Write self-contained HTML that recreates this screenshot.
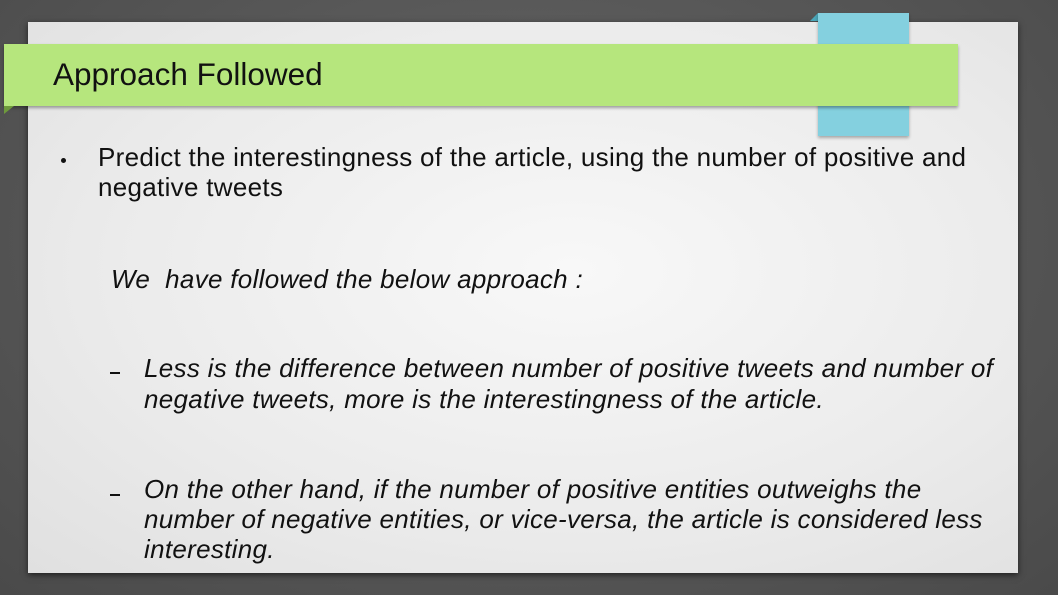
<!DOCTYPE html>
<html><head><style>
body{margin:0;width:1058px;height:595px;background:radial-gradient(ellipse at 50% 40%,#666 0%,#4a4a4a 100%);position:relative;overflow:hidden;font-family:"Liberation Sans",Arial,sans-serif;}
.paper{position:absolute;left:28px;top:22px;width:990px;height:551px;background:radial-gradient(ellipse at 55% 45%,#f8f8f8 0%,#ebebeb 60%,#e0e0e0 100%);box-shadow:0 2px 6px rgba(0,0,0,.6);}
.blue{position:absolute;left:818px;top:13px;width:91px;height:123px;background:#84d0df;box-shadow:0 2px 3px rgba(0,0,0,.3);}
.bluefold{position:absolute;left:810px;top:13px;width:0;height:0;border-right:8px solid #4aa6b8;border-top:8px solid transparent;}
.green{position:absolute;left:4px;top:44px;width:954px;height:62px;background:#b6e67d;box-shadow:0 2px 3px rgba(0,0,0,.35);}
.greenfold{position:absolute;left:4px;top:106px;width:0;height:0;border-top:8px solid #6e9a3c;border-left:10px solid transparent;transform:scaleX(-1);}
.t{position:absolute;white-space:nowrap;color:#111;font-size:26px;letter-spacing:0.3px;}
.title{left:53px;top:56px;font-size:31.5px;letter-spacing:0;}
i{font-style:italic}
.dash{position:absolute;width:10px;height:2px;background:#111;}
</style></head><body>
<div class="paper"></div>
<div class="bluefold"></div>
<div class="blue"></div>
<div class="green"></div>
<div class="greenfold"></div>
<div class="t title">Approach Followed</div>
<div style="position:absolute;left:61px;top:158px;width:5px;height:5px;border-radius:50%;background:#111"></div>
<div class="t" style="left:98px;top:142px;line-height:30px">Predict the interestingness of the article, using the number of positive and<br>negative tweets</div>
<div class="t" style="left:111px;top:264px"><i>We&nbsp; have followed the below approach :</i></div>
<div class="dash" style="left:110px;top:372px"></div>
<div class="t" style="left:144px;top:353px;line-height:31px"><i>Less is the difference between number of positive tweets and number of<br>negative tweets, more is the interestingness of the article.</i></div>
<div class="dash" style="left:110px;top:494px"></div>
<div class="t" style="left:144px;top:474px;line-height:30px"><i>On the other hand, if the number of positive entities outweighs the<br>number of negative entities, or vice-versa, the article is considered less<br>interesting.</i></div>
</body></html>
